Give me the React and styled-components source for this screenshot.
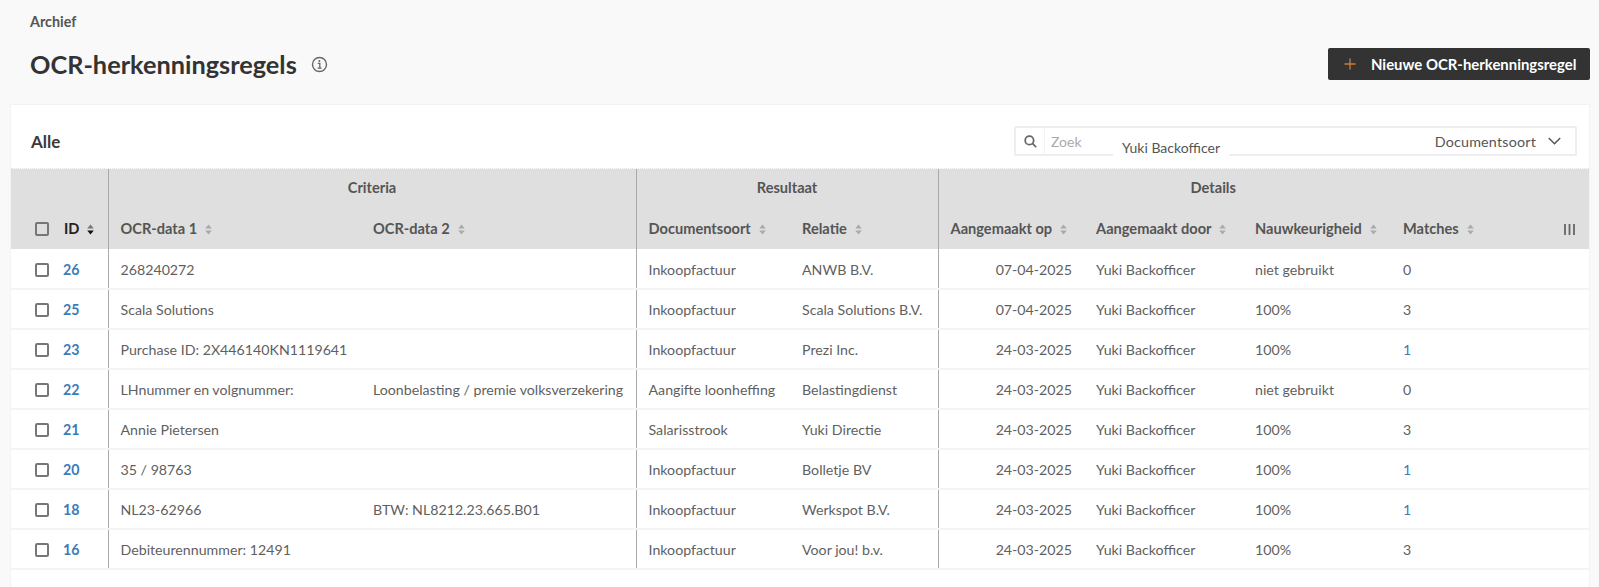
import React from 'react';
import styled, { createGlobalStyle } from 'styled-components';

const Global = createGlobalStyle`
  html, body { margin: 0; padding: 0; background: #f9f9f9; height: 100%; overflow: hidden; }
  body { font-family: Lato, "Noto Sans", sans-serif; color: #5a5a5a; }
`;

const Page = styled.div`
  display: flex; flex-direction: column; height: 587px; box-sizing: border-box; padding: 0 10px 0 11px;
`;
const Crumb = styled.div`
  font-size: 14.3px; font-weight: 700; color: #555; line-height: 18px; padding: 13px 0 0 19px;
`;
const TitleBar = styled.div`
  display: flex; align-items: center; justify-content: space-between; height: 32px; margin: 17px -1px 0 0; padding-left: 19px;
`;
const TitleWrap = styled.div`display: flex; align-items: center; gap: 14px;`;
const Title = styled.h1`
  margin: 0; font-size: 25.3px; font-weight: 700; color: #333; line-height: 32px;
`;
const InfoIcon = styled.svg`margin-top: 1px;`;
const NewButton = styled.button`
  display: flex; align-items: center; gap: 15px; height: 32px; width: 262px; box-sizing: border-box; padding: 0 0 0 16px; border: 0;
  border-radius: 2px; background: #333; color: #fff; font: 700 14.9px Lato, sans-serif; white-space: nowrap;
`;
const PlusIcon = styled.svg`flex-shrink: 0;`;
const Card = styled.section`
  flex: 1; margin-top: 25px; background: #fff; box-shadow: 0 0 0 1px #f3f3f3;
`;
const CardHead = styled.div`
  display: flex; align-items: center; justify-content: space-between; height: 64px; padding: 9px 12px 0 20px; box-sizing: border-box;
  border-bottom: 1px dotted #e4e4e4;
`;
const AllLabel = styled.div`font-size: 17px; font-weight: 700; color: #3a3a3a;`;
const Filter = styled.div`
  position: relative; display: flex; align-items: center; width: 563px; height: 30px; box-sizing: border-box;
  border: 2px solid #eeeeee; border-radius: 2px;
`;
const SearchBox = styled.div`
  display: flex; align-items: center; width: 28px; height: 100%; justify-content: center; border-right: 1px solid #f2f2f2; color: #666;
`;
const Placeholder = styled.span`font-size: 14px; color: #aaa; margin-left: 6px; flex: 1;`;
const Chosen = styled.span`
  position: absolute; left: 97px; top: 9px; padding: 0 9px; background: #fff; font-size: 14px; line-height: 22px; color: #555; white-space: nowrap;
`;
const DocSelect = styled.div`
  display: flex; align-items: center; gap: 12px; padding-right: 14px; font-size: 14.3px; color: #555; letter-spacing: 0.2px;
`;
const Table = styled.table`
  width: 100%; table-layout: fixed; border-collapse: collapse; font-size: 14.2px;
`;
const Head = styled.thead`background: #dfdfdf;`;
const GroupTh = styled.th`
  height: 40px; box-sizing: border-box; padding: 0 0 3px; font-size: 14.6px; font-weight: 700; color: #555; text-align: center;
  border-left: ${p => (p.$line ? '1px solid #a9a9a9' : '0')};
`;
const Th = styled.th`
  height: 40px; box-sizing: border-box; padding: ${p => (p.$flush ? '0' : '0 0 1px 12px')}; font-size: 14.6px; font-weight: 700; text-align: left; white-space: nowrap;
  color: ${p => (p.$dark ? '#222' : '#555')};
  border-left: ${p => (p.$line ? '1px solid #a9a9a9' : '0')};
`;
const Row = styled.tr`border-bottom: 2px solid #f4f4f4;`;
const Td = styled.td`
  height: 40px; box-sizing: border-box; padding: ${p => (p.$flush ? '2px 0 0' : '1px 12px 0')}; white-space: nowrap; color: #5f5f5f;
  text-align: ${p => (p.$right ? 'right' : 'left')};
  border-left: ${p => (p.$line ? '1px solid #a9a9a9' : '0')};
`;
const IdCell = styled(Td)`padding-left: 11px;`;
const IdLink = styled.a`color: #3b7bb9; font-weight: 700;`;
const CountLink = styled.span`color: ${p => (p.$link ? '#3b7bb9' : '#5f5f5f')};`;
const Check = styled.span`
  display: block; width: 14px; height: 14px; box-sizing: border-box; margin-left: 24px; border: 2px solid #777; border-radius: 2px;
`;
const SortWrap = styled.svg`margin-left: 8px; vertical-align: -1px;`;
const ColsIcon = styled.svg`display: block; margin-left: 76px;`;

const Sort = ({ active }) => (
  <SortWrap width="7" height="11" viewBox="0 0 7 11">
    <path d="M3.5 0.5 6.8 4.6H.2z" fill={active ? '#777' : '#aaa'} />
    <path d="M3.5 10.5 .2 6.4h6.6z" fill={active ? '#111' : '#aaa'} />
  </SortWrap>
);

const rows = [
  ['26', '268240272', '', 'Inkoopfactuur', 'ANWB B.V.', '07-04-2025', 'niet gebruikt', '0', false],
  ['25', 'Scala Solutions', '', 'Inkoopfactuur', 'Scala Solutions B.V.', '07-04-2025', '100%', '3', false],
  ['23', 'Purchase ID: 2X446140KN1119641', '', 'Inkoopfactuur', 'Prezi Inc.', '24-03-2025', '100%', '1', true],
  ['22', 'LHnummer en volgnummer:', 'Loonbelasting / premie volksverzekering', 'Aangifte loonheffing', 'Belastingdienst', '24-03-2025', 'niet gebruikt', '0', false],
  ['21', 'Annie Pietersen', '', 'Salarisstrook', 'Yuki Directie', '24-03-2025', '100%', '3', false],
  ['20', '35 / 98763', '', 'Inkoopfactuur', 'Bolletje BV', '24-03-2025', '100%', '1', true],
  ['18', 'NL23-62966', 'BTW: NL8212.23.665.B01', 'Inkoopfactuur', 'Werkspot B.V.', '24-03-2025', '100%', '1', true],
  ['16', 'Debiteurennummer: 12491', '', 'Inkoopfactuur', 'Voor jou! b.v.', '24-03-2025', '100%', '3', false],
];
const widths = [41, 56, 253, 275, 154, 148, 146, 159, 148, 97, 101];

export default function App() {
  return (
    <Page>
      <Global />
      <Crumb>Archief</Crumb>
      <TitleBar>
        <TitleWrap>
          <Title>OCR-herkenningsregels</Title>
          <InfoIcon width="17" height="17" viewBox="0 0 17 17" fill="none" stroke="#666">
            <circle cx="8.5" cy="8.5" r="7" strokeWidth="1.4" />
            <path d="M6.8 7.4h2v4.6M6.6 12.2h4" strokeWidth="1.3" />
            <circle cx="8.4" cy="4.9" r="1" fill="#666" stroke="none" />
          </InfoIcon>
        </TitleWrap>
        <NewButton>
          <PlusIcon width="12" height="12" viewBox="0 0 12 12" stroke="#c87f35" strokeWidth="1.3"><path d="M6 0.5v11M0.5 6h11" /></PlusIcon>
          Nieuwe OCR-herkenningsregel
        </NewButton>
      </TitleBar>
      <Card>
        <CardHead>
          <AllLabel>Alle</AllLabel>
          <Filter>
            <SearchBox>
              <svg width="13" height="13" viewBox="0 0 12 12" fill="none" stroke="#666" strokeWidth="1.6"><circle cx="5" cy="5" r="3.9" /><path d="M8 8l3.3 3.3" /></svg>
            </SearchBox>
            <Placeholder>Zoek</Placeholder>
            <Chosen>Yuki Backofficer</Chosen>
            <DocSelect>
              Documentsoort
              <svg width="13" height="8" viewBox="0 0 13 8" fill="none" stroke="#555" strokeWidth="1.5"><path d="M.8 1l5.7 5.7L12.2 1" /></svg>
            </DocSelect>
          </Filter>
        </CardHead>
        <Table>
          <colgroup>{widths.map((w, i) => <col key={i} style={{ width: w }} />)}</colgroup>
          <Head>
            <tr>
              <GroupTh colSpan={2} />
              <GroupTh colSpan={2} $line>Criteria</GroupTh>
              <GroupTh colSpan={2} $line>Resultaat</GroupTh>
              <GroupTh colSpan={4} $line>Details</GroupTh>
              <GroupTh />
            </tr>
            <tr>
              <Th $flush><Check /></Th>
              <Th $dark>ID<Sort active /></Th>
              <Th $line>OCR-data 1<Sort /></Th>
              <Th>OCR-data 2<Sort /></Th>
              <Th $line>Documentsoort<Sort /></Th>
              <Th>Relatie<Sort /></Th>
              <Th $line>Aangemaakt op<Sort /></Th>
              <Th>Aangemaakt door<Sort /></Th>
              <Th>Nauwkeurigheid<Sort /></Th>
              <Th>Matches<Sort /></Th>
              <Th $flush>
                <ColsIcon width="11" height="11" viewBox="0 0 11 11" stroke="#666" strokeWidth="1.8"><path d="M1 0v11M5.5 0v11M10 0v11" /></ColsIcon>
              </Th>
            </tr>
          </Head>
          <tbody>
            {rows.map(r => (
              <Row key={r[0]}>
                <Td $flush><Check /></Td>
                <IdCell><IdLink>{r[0]}</IdLink></IdCell>
                <Td $line>{r[1]}</Td>
                <Td>{r[2]}</Td>
                <Td $line>{r[3]}</Td>
                <Td>{r[4]}</Td>
                <Td $line $right>{r[5]}</Td>
                <Td>Yuki Backofficer</Td>
                <Td>{r[6]}</Td>
                <Td><CountLink $link={r[8]}>{r[7]}</CountLink></Td>
                <Td />
              </Row>
            ))}
          </tbody>
        </Table>
      </Card>
    </Page>
  );
}
